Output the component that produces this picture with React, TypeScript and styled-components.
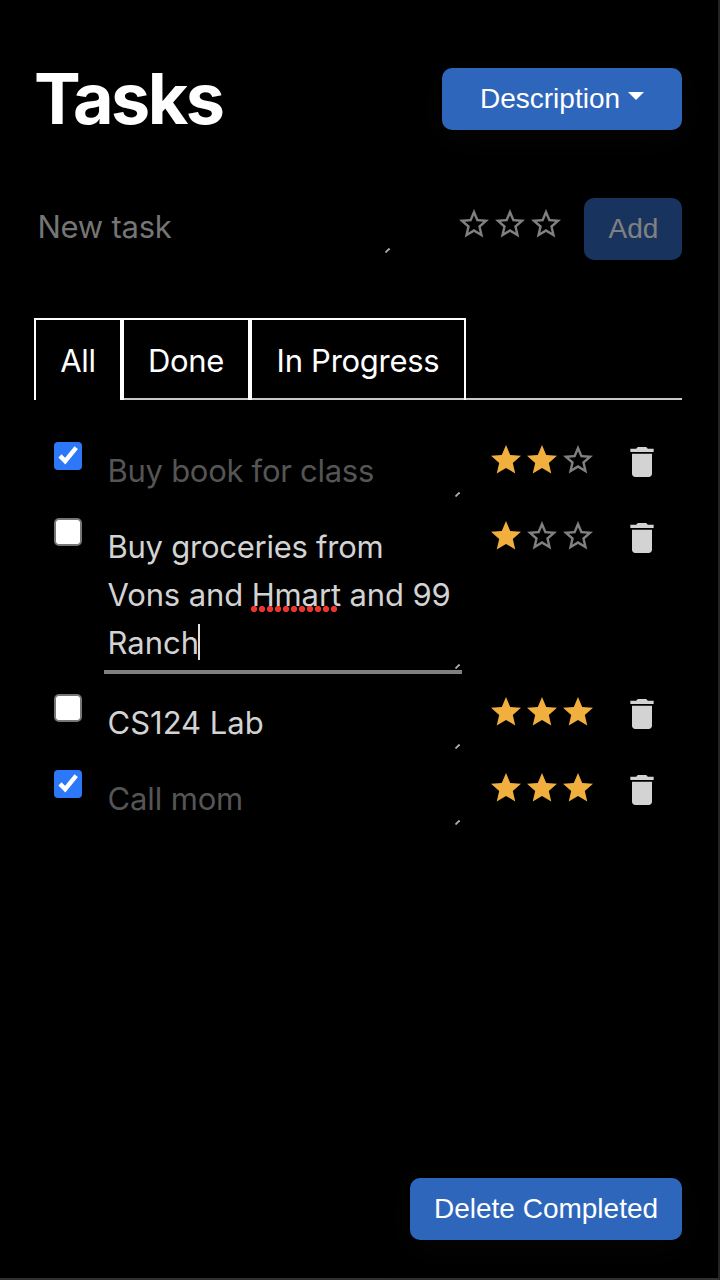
import React from "react";
import styled, { createGlobalStyle, css } from "styled-components";

const GlobalStyle = createGlobalStyle`
  *, *::before, *::after { box-sizing: border-box; }
  html, body { margin: 0; padding: 0; background: #000; }
  button { font: inherit; color: inherit; border: 0; background: none; padding: 0; }
`;

const Page = styled.div`
  display: flex;
  flex-direction: column;
  width: 720px;
  height: 1280px;
  padding: 68px 36px 38px 34px;
  background: #000;
  border-right: 2px solid #242424;
  border-bottom: 2px solid #303030;
  color: #fff;
  font-family: Inter, "Noto Sans", sans-serif;
  font-size: 31px;
  line-height: 48px;
`;

const Header = styled.header`
  display: flex;
  justify-content: space-between;
  align-items: center;
  height: 62px;
`;

const Title = styled.h1`
  margin: 0;
  font-size: 70px;
  font-weight: 700;
  line-height: 62px;
  letter-spacing: -2.6px;
`;

const PrimaryButton = styled.button<{ $width: number }>`
  && {
    display: flex;
    align-items: center;
    justify-content: center;
    flex: none;
    width: ${(p) => p.$width}px;
    height: 62px;
    border-radius: 10px;
    background: #2e66bb;
    color: #fff;
    font-family: "Liberation Sans", Arial, sans-serif;
    font-size: 28px;
    line-height: 62px;
    box-shadow: 0 8px 36px #050605;
  }
  &&:disabled {
    opacity: 0.5;
    box-shadow: none;
    padding-left: 1px;
  }
`;

const DropdownArrow = styled.span`
  margin: -6px 0 0 8px;
  border: 8px solid transparent;
  border-top-color: #fff;
  border-bottom: 0;
`;

const NewTaskRow = styled.section`
  display: flex;
  align-items: flex-start;
  margin-top: 68px;
  height: 62px;
`;

const NewTaskStars = styled.div`
  margin: 8px 20px 0 64px;
`;

const Field = styled.div<{ $tone: "hint" | "done" | "open"; $tracking: number; $focused?: boolean }>`
  position: relative;
  flex: none;
  width: 358px;
  padding: 5px 4px 3px 3.5px;
  letter-spacing: ${(p) => p.$tracking}px;
  color: ${(p) => ({ hint: "#757575", done: "#555", open: "#d3d3d3" })[p.$tone]};
  ${(p) =>
    p.$focused &&
    css`
      border-bottom: 4px solid #808080;
    `}
`;

const Grip = styled.svg`
  position: absolute;
  right: 2px;
  bottom: 1px;
`;

const Line = styled.div<{ $tracking: number }>`
  height: 48px;
  white-space: nowrap;
  letter-spacing: ${(p) => p.$tracking}px;
`;

const Misspelled = styled.span`
  position: relative;
  &::after {
    content: "";
    position: absolute;
    left: -2px;
    top: 29px;
    width: 88px;
    height: 8px;
    background: radial-gradient(circle at 4px 4px, #f0342a 2.8px, transparent 3.4px) 0 0 / 8px 8px;
  }
`;

const Caret = styled.span`
  display: inline-block;
  width: 2px;
  height: 36px;
  margin-left: -1px;
  vertical-align: -6px;
  background: #e0e0e0;
`;

const Tabs = styled.nav`
  display: flex;
  margin-top: 58px;
  height: 82px;
  border-bottom: 2px solid #c8c8c8;
`;

const Tab = styled.button<{ $width: number; $active?: boolean }>`
  && {
    width: ${(p) => p.$width}px;
    height: 82px;
    padding-top: 2px;
    border: 2px solid #fff;
    border-bottom: 0;
    background: ${(p) => (p.$active ? "#000" : "transparent")};
    letter-spacing: -0.28px;
  }
`;

const TaskList = styled.ul`
  display: flex;
  flex-direction: column;
  gap: 20px;
  flex: 1;
  margin: 0;
  padding: 42px 20px 0;
  list-style: none;
`;

const TaskRow = styled.li`
  display: flex;
  align-items: flex-start;
`;

const CheckBox = styled.span<{ $checked: boolean }>`
  display: block;
  flex: none;
  width: 28px;
  height: 28px;
  margin-right: 22px;
  border-radius: 4px;
  background: ${(p) => (p.$checked ? "#2c78f8" : "#fff")};
  ${(p) => !p.$checked && "border: 2px solid #767676; border-radius: 5px;"}
  svg { display: block; }
`;

const StarRow = styled.div`
  display: flex;
  svg { display: block; }
`;

const TaskStars = styled.div`
  margin: 0 26px;
`;

const DeleteButton = styled.button`
  svg { display: block; }
`;

const Footer = styled.footer`
  display: flex;
  justify-content: flex-end;
`;

const STAR = "M12 17.27L18.18 21l-1.64-7.03L22 9.24l-7.19-.61L12 2 9.19 8.63 2 9.24l5.46 4.73L5.82 21z";
const STAR_BORDER =
  "M22 9.24l-7.19-.62L12 2 9.19 8.63 2 9.24l5.46 4.73L5.82 21 12 17.27 18.18 21l-1.63-7.03L22 9.24zM12 15.4l-3.76 2.27 1-4.28-3.32-2.88 4.38-.38L12 6.1l1.71 4.04 4.38.38-3.32 2.88 1 4.28L12 15.4z";

function Rating({ value }: { value: number }) {
  return (
    <StarRow>
      {[1, 2, 3].map((n) => (
        <svg key={n} width="36" height="36" viewBox="0 0 24 24" fill={n <= value ? "#f1b03e" : "#808080"}>
          <path d={n <= value ? STAR : STAR_BORDER} />
        </svg>
      ))}
    </StarRow>
  );
}

function ResizeGrip() {
  return (
    <Grip width="5" height="5" viewBox="0 0 5 5">
      <path d="M0.5 4.5L4.5 0.5" stroke="#b0b0b0" strokeWidth="1.8" />
    </Grip>
  );
}

interface Task {
  id: string;
  text: React.ReactNode;
  done: boolean;
  stars: number;
  tracking: number;
  focused?: boolean;
}

const tasks: Task[] = [
  { id: "book", text: "Buy book for class", done: true, stars: 2, tracking: -0.28 },
  {
    id: "groceries",
    text: (
      <>
        <Line $tracking={-0.25}>Buy groceries from</Line>
        <Line $tracking={-0.12}>
          Vons and <Misspelled>Hmart</Misspelled> and 99
        </Line>
        <Line $tracking={0}>
          Ranch
          <Caret />
        </Line>
      </>
    ),
    done: false,
    stars: 1,
    tracking: 0,
    focused: true,
  },
  { id: "lab", text: "CS124 Lab", done: false, stars: 3, tracking: 0 },
  { id: "mom", text: "Call mom", done: true, stars: 3, tracking: -0.13 },
];

export default function App() {
  return (
    <Page>
      <GlobalStyle />
      <Header>
        <Title>Tasks</Title>
        <PrimaryButton $width={240}>
          Description
          <DropdownArrow />
        </PrimaryButton>
      </Header>

      <NewTaskRow>
        <Field $tone="hint" $tracking={-0.25}>
          New task
          <ResizeGrip />
        </Field>
        <NewTaskStars>
          <Rating value={0} />
        </NewTaskStars>
        <PrimaryButton $width={98} disabled>
          Add
        </PrimaryButton>
      </NewTaskRow>

      <Tabs>
        <Tab $width={88} $active>All</Tab>
        <Tab $width={128}>Done</Tab>
        <Tab $width={216}>In Progress</Tab>
      </Tabs>

      <TaskList>
        {tasks.map((task) => (
          <TaskRow key={task.id}>
            <CheckBox $checked={task.done}>
              {task.done && (
                <svg width="28" height="28" viewBox="0 0 28 28" fill="none">
                  <path d="M6 13.9L11.2 19.1L22.2 5.6" stroke="#fff" strokeWidth="4.4" />
                </svg>
              )}
            </CheckBox>
            <Field $tone={task.done ? "done" : "open"} $tracking={task.tracking} $focused={task.focused}>
              {task.text}
              <ResizeGrip />
            </Field>
            <TaskStars>
              <Rating value={task.stars} />
            </TaskStars>
            <DeleteButton aria-label="Delete task">
              <svg width="40" height="40" viewBox="0 0 24 24" fill="#d3d3d3">
                <path d="M6 19c0 1.1.9 2 2 2h8c1.1 0 2-.9 2-2V7H6v12zM19 4h-3.5l-1-1h-5l-1 1H5v2h14V4z" />
              </svg>
            </DeleteButton>
          </TaskRow>
        ))}
      </TaskList>

      <Footer>
        <PrimaryButton $width={272}>Delete Completed</PrimaryButton>
      </Footer>
    </Page>
  );
}
